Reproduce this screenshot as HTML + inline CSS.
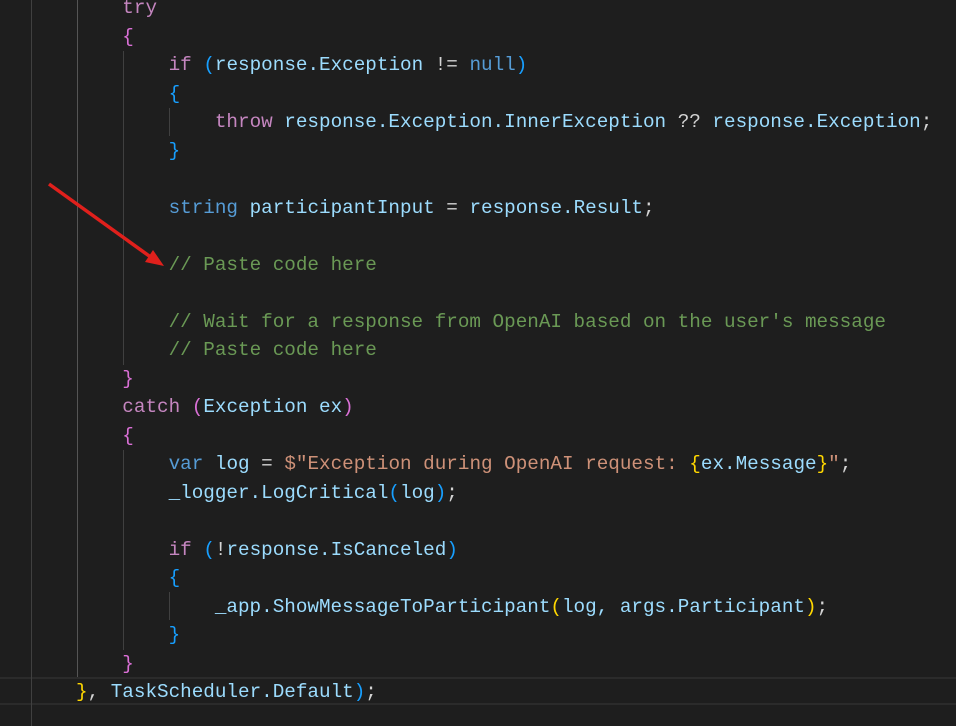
<!DOCTYPE html>
<html><head><meta charset="utf-8"><style>
html,body{margin:0;padding:0;background:#1e1e1e;width:956px;height:726px;overflow:hidden;}
.l{position:absolute;left:0;height:28px;line-height:28px;white-space:pre;font-family:"Liberation Mono",monospace;font-size:19.3px;color:#9cdcfe;}
.k{color:#c586c0}.t{color:#569cd6}.c{color:#6a9955}.s{color:#ce9178}.w{color:#d4d4d4}
.p{color:#da70d6}.b{color:#179fff}.y{color:#ffd700}
.g{position:absolute;width:1px;background:#404040;}
</style></head><body>
<div style="position:absolute;left:0;top:677px;width:956px;height:28px;border-top:2px solid #2b2b2b;border-bottom:2px solid #2b2b2b;box-sizing:border-box"></div>
<div class="g" style="left:31px;top:0;height:726px"></div>
<div class="g" style="left:77px;top:0;height:677px;background:#555"></div>
<div class="g" style="left:123px;top:51px;height:314px"></div>
<div class="g" style="left:123px;top:450px;height:200px"></div>
<div class="g" style="left:169px;top:108px;height:28px"></div>
<div class="g" style="left:169px;top:592px;height:28px"></div>
<div id="code"></div>
<script>
var L=[
'    <span class="k">try</span>',
'    <span class="p">{</span>',
'        <span class="k">if</span> <span class="b">(</span>response.Exception <span class="w">!=</span> <span class="t">null</span><span class="b">)</span>',
'        <span class="b">{</span>',
'            <span class="k">throw</span> response.Exception.InnerException <span class="w">??</span> response.Exception<span class="w">;</span>',
'        <span class="b">}</span>',
'',
'        <span class="t">string</span> participantInput <span class="w">=</span> response.Result<span class="w">;</span>',
'',
'        <span class="c">// Paste code here</span>',
'',
'        <span class="c">// Wait for a response from OpenAI based on the user\'s message</span>',
'        <span class="c">// Paste code here</span>',
'    <span class="p">}</span>',
'    <span class="k">catch</span> <span class="p">(</span>Exception ex<span class="p">)</span>',
'    <span class="p">{</span>',
'        <span class="t">var</span> log <span class="w">=</span> <span class="s">$"Exception during OpenAI request: </span><span class="y">{</span>ex.Message<span class="y">}</span><span class="s">"</span><span class="w">;</span>',
'        _logger.LogCritical<span class="b">(</span>log<span class="b">)</span><span class="w">;</span>',
'',
'        <span class="k">if</span> <span class="b">(</span><span class="w">!</span>response.IsCanceled<span class="b">)</span>',
'        <span class="b">{</span>',
'            _app.ShowMessageToParticipant<span class="y">(</span>log, args.Participant<span class="y">)</span><span class="w">;</span>',
'        <span class="b">}</span>',
'    <span class="p">}</span>',
'<span class="y">}</span><span class="w">,</span> TaskScheduler.Default<span class="b">)</span><span class="w">;</span>'
];
var h='';for(var i=0;i<L.length;i++){h+='<div class="l" style="top:'+(i*28.5-6).toFixed(1)+'px;left:76px">'+L[i]+'</div>';}
document.getElementById('code').innerHTML=h;
</script>
<svg style="position:absolute;left:0;top:0" width="956" height="726">
<line x1="49" y1="184" x2="152" y2="258" stroke="#e0201c" stroke-width="3.5"/>
<polygon points="164,266 145,262 153,250" fill="#e0201c"/>
</svg>
</body></html>
